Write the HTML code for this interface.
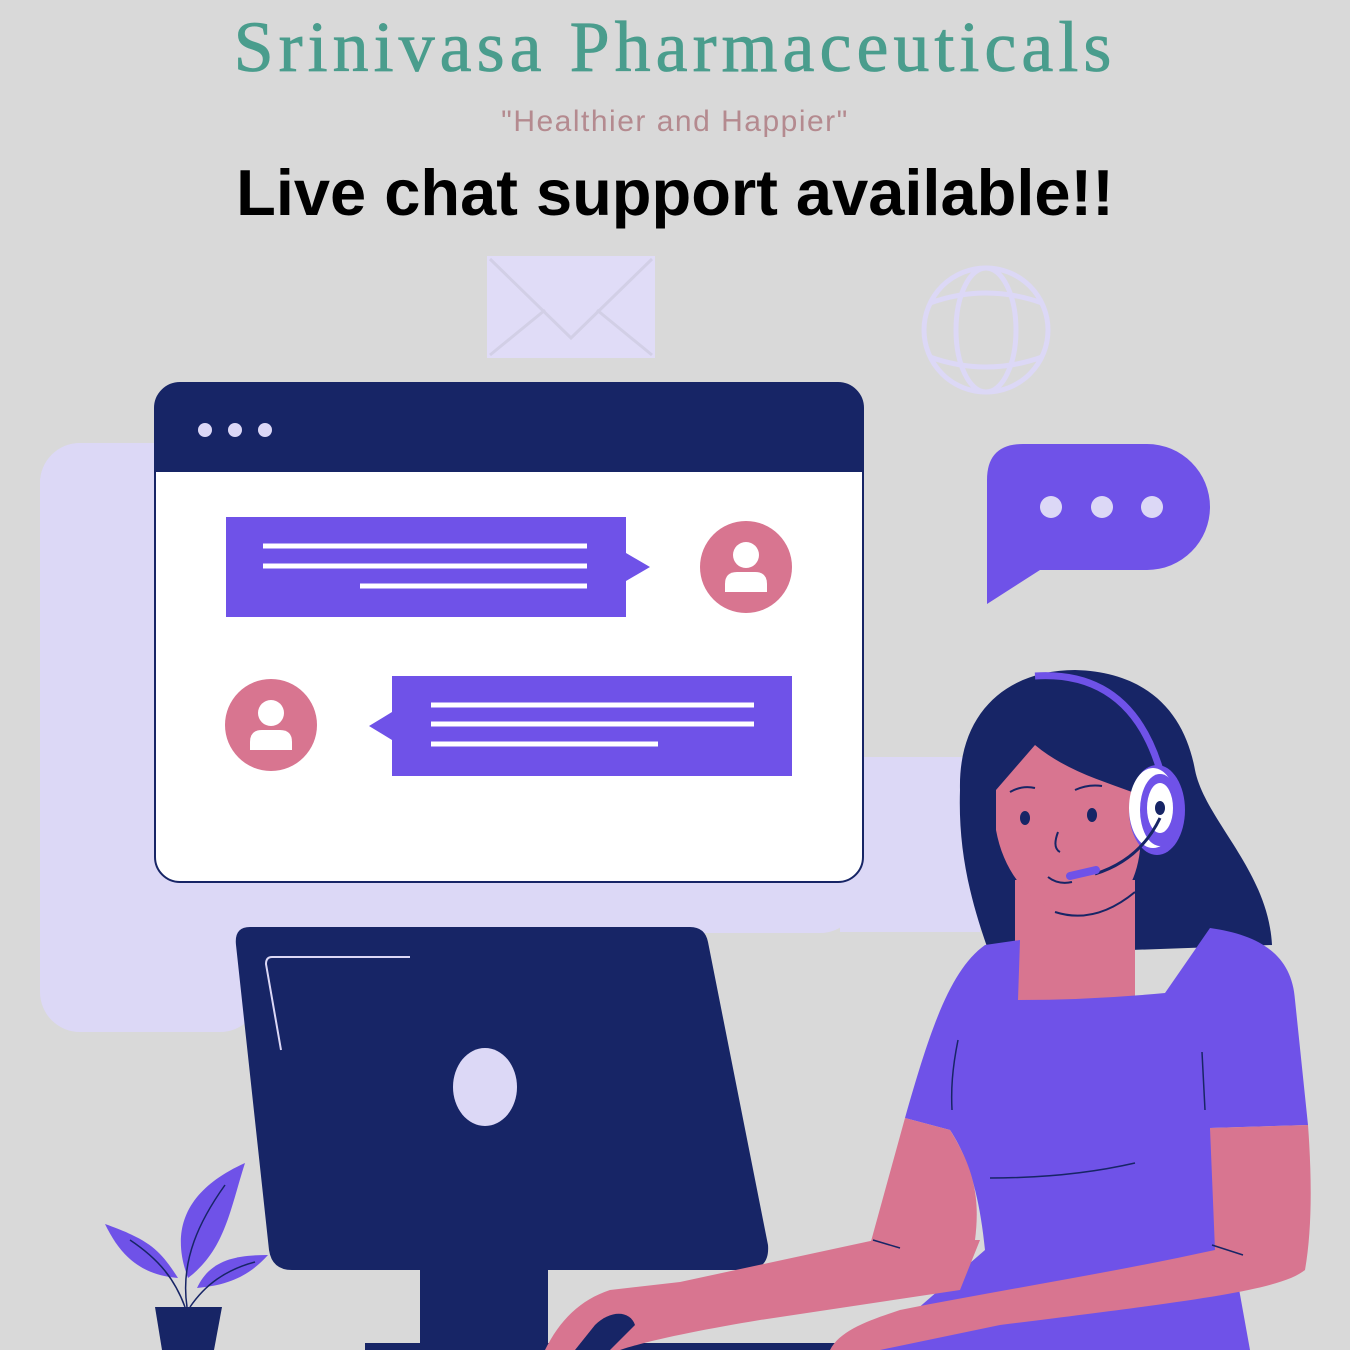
<!DOCTYPE html>
<html><head><meta charset="utf-8"><style>
html,body{margin:0;padding:0;background:#d9d9d9;}
.wrap{position:relative;width:1350px;height:1350px;overflow:hidden;background:#d9d9d9;}
.t1{position:absolute;top:6px;left:0;width:1350px;text-align:center;font-family:"Liberation Serif",serif;font-size:72px;color:#4a9d8d;letter-spacing:5px;-webkit-text-stroke:0.8px #4a9d8d;}
.t2{position:absolute;top:105px;left:0;width:1350px;text-align:center;font-family:"Liberation Sans",sans-serif;font-size:30px;color:#b48a8f;letter-spacing:1.5px;}
.t3{position:absolute;top:155px;left:0;width:1350px;text-align:center;font-family:"Liberation Sans",sans-serif;font-weight:bold;font-size:65px;color:#000;}
svg{position:absolute;left:0;top:0;}
</style></head><body><div class="wrap">
<svg width="1350" height="1350" viewBox="0 0 1350 1350">
<g fill="#dcd8f6">
<rect x="40" y="443" width="820" height="490" rx="40"/>
<rect x="840" y="757" width="140" height="175"/>
<rect x="40" y="443" width="220" height="589" rx="40"/>
</g>
<rect x="487" y="256" width="168" height="102" fill="#e0dcf7"/>
<path d="M490,259 L571,338 L652,259 M490,355 L545,310 M652,355 L597,310" stroke="#d2cfe6" stroke-width="3" fill="none"/>
<g stroke="#dcd8f6" stroke-width="5" fill="none">
<circle cx="986" cy="330" r="62"/>
<ellipse cx="986" cy="330" rx="30" ry="62"/>
<path d="M930,303 Q986,283 1042,303 M930,357 Q986,377 1042,357"/>
</g>
<rect x="155" y="383" width="708" height="499" rx="25" fill="#fff" stroke="#172566" stroke-width="2"/>
<path d="M180,383 H838 A25,25 0 0 1 863,408 V472 H155 V408 A25,25 0 0 1 180,383Z" fill="#172566"/>
<g fill="#dcd8f6"><circle cx="205" cy="430" r="7"/><circle cx="235" cy="430" r="7"/><circle cx="265" cy="430" r="7"/></g>
<path d="M226,517 H626 V553 L650,567 L626,581 V617 H226Z" fill="#6f52e8"/>
<g stroke="#fff" stroke-width="5"><path d="M263,546H587M263,566H587M360,586H587"/></g>
<path d="M392,676 H792 V776 H392 V740 L369,726 L392,712Z" fill="#6f52e8"/>
<g stroke="#fff" stroke-width="5"><path d="M431,705H754M431,724H754M431,744H658"/></g>
<g>
<circle cx="746" cy="567" r="46" fill="#d87590"/>
<circle cx="746" cy="555" r="13" fill="#fff"/>
<path d="M725,592 V584 Q725,572 737,572 H755 Q767,572 767,584 V592Z" fill="#fff"/>
<circle cx="271" cy="725" r="46" fill="#d87590"/>
<circle cx="271" cy="713" r="13" fill="#fff"/>
<path d="M250,750 V742 Q250,730 262,730 H280 Q292,730 292,742 V750Z" fill="#fff"/>
</g>
<path d="M1050,444 H1147 A63,63 0 0 1 1147,570 H1040 L987,604 V480 Q987,444 1023,444Z" fill="#6f52e8"/>
<g fill="#dcd8f6"><circle cx="1051" cy="507" r="11"/><circle cx="1102" cy="507" r="11"/><circle cx="1152" cy="507" r="11"/></g>
<path d="M250,927 H690 Q705,927 708,942 L768,1245 Q770,1270 745,1270 H292 Q272,1270 269,1250 L236,945 Q234,927 250,927Z" fill="#172566"/>
<rect x="420" y="1268" width="128" height="82" fill="#172566"/>
<rect x="365" y="1343" width="510" height="7" fill="#172566"/>
<path d="M410,957 H272 Q266,957 266,964 L281,1050" stroke="#dcd8f6" stroke-width="2" fill="none"/>
<ellipse cx="485" cy="1087" rx="32" ry="39" fill="#dcd8f6"/>
<path d="M155,1307 H222 L214,1350 H162Z" fill="#172566"/>
<g fill="#6f52e8">
<path d="M188,1278 C170,1230 185,1190 245,1163 C230,1210 225,1250 188,1278Z"/>
<path d="M178,1278 C160,1250 150,1240 105,1224 C120,1255 140,1275 178,1278Z"/>
<path d="M197,1288 C210,1260 235,1255 268,1255 C250,1275 230,1285 197,1288Z"/>
</g>
<path d="M187,1307 C180,1260 200,1220 225,1185 M185,1307 C175,1280 160,1260 130,1240 M190,1307 C205,1285 225,1270 255,1262" stroke="#172566" stroke-width="1.5" fill="none"/>
<path d="M960,790 C958,710 1010,670 1075,670 C1150,672 1185,715 1195,770 C1205,820 1268,870 1272,945 L990,955 C970,900 958,850 960,790Z" fill="#172566"/>
<path d="M1015,880 H1135 V1010 H1015Z" fill="#d87590"/>
<path d="M996,790 L1035,745 C1065,770 1100,780 1132,792 L1140,850 C1135,895 1110,915 1080,915 C1040,915 1005,880 996,830Z" fill="#d87590"/>
<g fill="#172566"><ellipse cx="1025" cy="818" rx="5" ry="7"/><ellipse cx="1092" cy="815" rx="5" ry="7"/></g>
<g stroke="#172566" stroke-width="2" fill="none">
<path d="M1010,792 Q1022,785 1035,788 M1075,790 Q1088,784 1102,786 M1058,832 Q1052,848 1060,852 M1048,877 Q1058,885 1072,882 M1055,912 Q1095,925 1135,892"/>
</g>
<path d="M1035,676 Q1130,670 1160,770" stroke="#6f52e8" stroke-width="7" fill="none"/>
<ellipse cx="1157" cy="810" rx="28" ry="45" fill="#6f52e8"/>
<ellipse cx="1153" cy="808" rx="24" ry="40" fill="#fff"/>
<ellipse cx="1160" cy="810" rx="20" ry="36" fill="#6f52e8"/>
<ellipse cx="1160" cy="808" rx="13" ry="25" fill="#fff"/>
<ellipse cx="1160" cy="808" rx="5" ry="7" fill="#172566"/>
<path d="M1160,818 Q1140,860 1095,874" stroke="#172566" stroke-width="3" fill="none"/>
<path d="M1070,876 L1096,870" stroke="#6f52e8" stroke-width="8" stroke-linecap="round"/>
<path d="M985,945 L1020,940 L1018,1000 Q1090,1000 1165,993 L1210,928 C1260,935 1292,955 1295,1000 L1308,1125 L1210,1128 L1250,1350 H870 L985,1250 C980,1200 970,1160 950,1130 L905,1118 C930,1030 950,970 985,945Z" fill="#6f52e8"/>
<path d="M905,1118 L950,1130 C975,1170 980,1200 975,1240 L870,1245 Z" fill="#d87590"/>
<path d="M875,1240 L980,1240 L960,1290 L760,1320 C700,1330 650,1340 620,1350 H545 C560,1320 580,1300 610,1290 L680,1282 Z" fill="#d87590"/>
<path d="M1210,1128 L1308,1125 C1312,1180 1312,1230 1305,1270 C1280,1290 1200,1300 1000,1325 L880,1350 H830 C840,1330 870,1320 900,1310 C1000,1290 1100,1275 1215,1250Z" fill="#d87590"/>
<path d="M595,1325 C610,1310 630,1310 635,1325 L610,1350 H575Z" fill="#172566"/>
<g stroke="#172566" stroke-width="1.5" fill="none">
<path d="M958,1040 C952,1070 951,1090 952,1110 M1202,1052 L1205,1110 M990,1178 Q1070,1178 1135,1163 M873,1240 L900,1248 M1212,1245 L1243,1255"/>
</g>
</svg>
<div class="t1">Srinivasa Pharmaceuticals</div>
<div class="t2">"Healthier and Happier"</div>
<div class="t3">Live chat support available!!</div>
</div></body></html>
